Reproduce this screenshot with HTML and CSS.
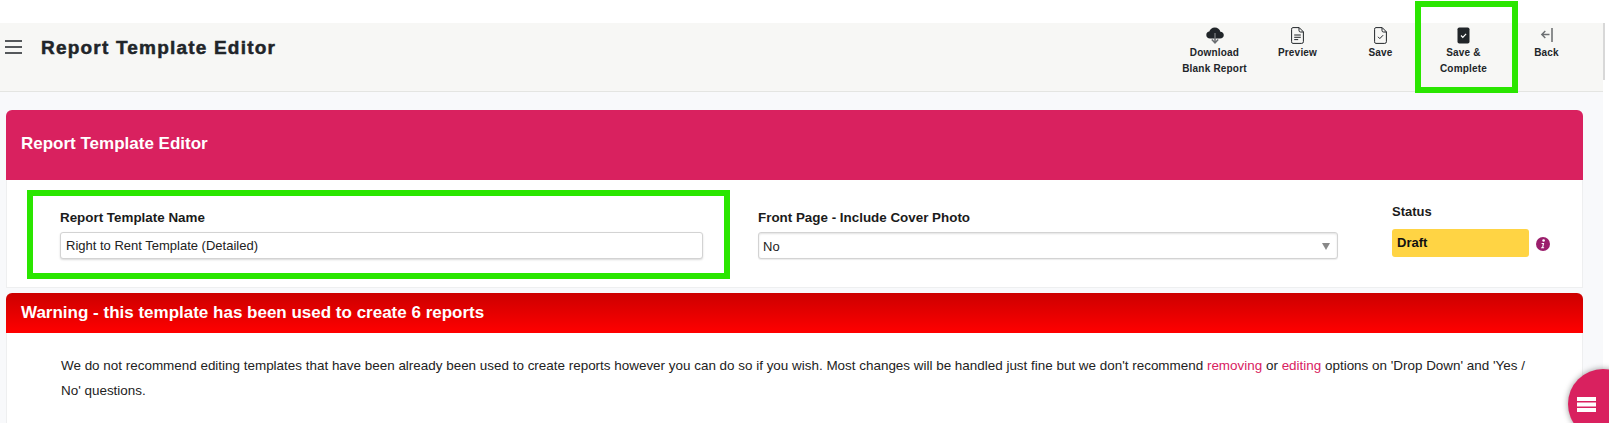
FILE: index.html
```html
<!DOCTYPE html>
<html lang="en">
<head>
    <meta charset="UTF-8">
    <meta name="viewport" content="width=device-width, initial-scale=1.0">
    <title>Report Template Editor</title>
    <link rel="stylesheet" href="styles.css">
</head>
<body>
    <div class="page">
        <header class="top-bar">
            <div class="top-left">
                <svg class="burger" width="17" height="14" viewBox="0 0 17 14"><path d="M0 1h17M0 7h17M0 13h17" stroke="#212529" stroke-width="1.3" fill="none"/></svg>
                <h1 class="top-title">Report Template Editor</h1>
            </div>
            <nav class="toolbar">
                <a class="tool">
                    <svg width="18" height="17" viewBox="0 0 18 17"><path d="M4 11.5C1.8 11.5 .3 10 .3 8 .3 6.100 1.700 4.800 3.300 4.600 3.900 2.200 6.100 .5 8.800 .5c2.800 0 5 1.800 5.600 4.200 2 .1 3.400 1.500 3.400 3.400 0 2-1.500 3.400-3.700 3.400z" fill="#212529"/><path d="M9 6v9.500M5.800 12.500 9 15.800l3.200-3.300" stroke="#6c6f72" stroke-width="1.500" fill="none"/></svg>
                    <span>Download<br>Blank Report</span>
                </a>
                <a class="tool">
                    <svg width="13" height="17" viewBox="0 0 13 17"><path d="M1.800 .6h6.400l4.200 4.200v9.900q0 1.700-1.700 1.700H1.800Q.6 16.400.6 14.700V2.300Q.6.600 1.800.6zM8 .8v2.700q0 1.500 1.500 1.500h2.800M3.200 8h6.600M3.200 10.300h6.600M3.200 12.600h4" stroke="#212529" stroke-width="1" fill="none"/></svg>
                    <span>Preview</span>
                </a>
                <a class="tool">
                    <svg width="13" height="17" viewBox="0 0 13 17"><path d="M1.800 .6h6.400l4.200 4.200v9.900q0 1.700-1.700 1.700H1.800Q.6 16.400.6 14.700V2.300Q.6.600 1.800.6zM8 .8v2.700q0 1.500 1.500 1.500h2.800" stroke="#212529" stroke-width="1" fill="none"/><path d="M4 9.800l1.800 1.800 3.300-3.400" stroke="#212529" stroke-width="1" fill="none"/></svg>
                    <span>Save</span>
                </a>
                <a class="tool">
                    <svg width="13" height="17" viewBox="0 0 13 17"><rect width="12" height="16" x=".5" y=".5" rx="1.800" fill="#212529"/><path d="M4 8.500l1.800 1.800 3.300-3.400" stroke="#fff" stroke-width="1.200" fill="none"/></svg>
                    <span>Save &amp;<br>Complete</span>
                </a>
                <a class="tool">
                    <svg width="13" height="17" viewBox="0 0 13 17"><path d="M12 1v14" stroke="#212529" stroke-width="1" fill="none"/><path d="M9.500 7.500H2M5.300 4 1.800 7.500 5.300 11" stroke="#6c6f72" stroke-width="1.400" fill="none"/></svg>
                    <span>Back</span>
                </a>
            </nav>
        </header>

        <section class="card">
            <div class="card-head pink">Report Template Editor</div>
            <div class="form-row">
                <div class="field field-name">
                    <label>Report Template Name</label>
                    <input type="text" value="Right to Rent Template (Detailed)">
                </div>
                <div class="field field-cover">
                    <label>Front Page - Include Cover Photo</label>
                    <div class="select-box">No<span class="caret"></span></div>
                </div>
                <div class="field field-status">
                    <label>Status</label>
                    <div class="status-pill">Draft</div>
                </div>
                <svg class="info" width="14" height="14" viewBox="0 0 14 14"><circle cx="7" cy="7" r="7" fill="#9b1f6c"/><circle cx="7.600" cy="3.500" r="1.300" fill="#fff"/><path d="M5.200 6h3l-1 4.200h1l-.2 1H5l.2-1h.9l.7-3.200h-.8z" fill="#fff"/></svg>
            </div>
        </section>

        <section class="card warning-card">
            <div class="card-head red">Warning - this template has been used to create 6 reports</div>
            <p class="warning-text">We do not recommend editing templates that have been already been used to create reports however you can do so if you wish. Most changes will be handled just fine but we don't recommend <a class="link">removing</a> or <a class="link">editing</a> options on 'Drop Down' and 'Yes / No' questions.</p>
        </section>
    </div>

    <div class="page-scroll"></div>
    <div class="highlight highlight-complete"></div>
    <div class="highlight highlight-name"></div>
    <div class="fab">
        <svg width="19" height="15" viewBox="0 0 19 15"><path d="M0 0h19v4H0zM0 5.500h19v4H0zM0 11h19v4H0z" fill="#fff"/></svg>
    </div>
</body>
</html>
```

FILE: styles.css
```css
* {
    margin: 0;
    padding: 0;
    box-sizing: border-box;
    font-family: "Liberation Sans", Arial, sans-serif;
}

html {
    overflow: hidden;
}

body {
    position: relative;
    height: 423px;
    padding-top: 23px;
    background: #fff;
    color: #212529;
    overflow: hidden;
}

.page {
    width: 1603px;
    height: 400px;
    background: #f8f9fb;
    overflow: hidden;
}

.top-bar {
    height: 69px;
    background: #f7f7f5;
    border-bottom: 1px solid #e4e5e2;
    display: flex;
    justify-content: space-between;
}

.top-left {
    display: flex;
    align-items: flex-start;
    gap: 19px;
    padding: 17px 0 0 5px;
}

.top-title {
    font-size: 19px;
    line-height: 15px;
    letter-spacing: 1.2px;
    -webkit-text-stroke: 0.5px #212529;
}

.toolbar {
    display: flex;
    padding: 4px 15px 0 0;
}

.tool {
    width: 83px;
    display: flex;
    flex-direction: column;
    align-items: center;
    font-size: 10px;
    font-weight: bold;
    line-height: 16px;
    letter-spacing: 0.2px;
    text-align: center;
}

.tool svg {
    height: 17px;
    margin-bottom: 1px;
}

.card {
    width: 1577px;
    margin: 18px 0 0 6px;
    background: #fff;
    border: 1px solid #eeeff0;
    border-width: 0 1px 1px 1px;
    border-radius: 6px 6px 0 0;
}

.card-head {
    color: #fff;
    font-weight: bold;
    font-size: 17px;
    border-radius: 6px 6px 0 0;
    margin: 0 -1px;
}

.pink {
    height: 70px;
    background: #d9215f;
    line-height: 68px;
    padding-left: 15px;
}

.form-row {
    height: 107px;
    display: flex;
    padding-left: 53px;
}

.field label {
    display: block;
    font-size: 13.4px;
    font-weight: bold;
    line-height: 16px;
    color: #1b1b1b;
}

.field-name {
    width: 643px;
    padding-top: 30px;
}

.field-name input,
.select-box {
    display: block;
    width: 100%;
    height: 27px;
    margin-top: 6px;
    padding: 0 5px;
    font-size: 13px;
    line-height: 27px;
    color: #222;
    background: #fff;
    border: 1px solid #d3d3d3;
    border-radius: 3px;
    box-shadow: 0 1px 2px rgba(0, 0, 0, 0.15);
}

.field-cover {
    width: 580px;
    margin-left: 55px;
    padding-top: 30px;
}

.select-box {
    position: relative;
    padding: 0 4px;
    box-shadow: inset 0 1px 2px rgba(0, 0, 0, 0.12), 0 1px 1px rgba(0, 0, 0, 0.08);
}

.caret {
    position: absolute;
    right: 7px;
    top: 10px;
    border-left: 4px solid transparent;
    border-right: 4px solid transparent;
    border-top: 7px solid #888;
}

.field-status {
    width: 137px;
    margin-left: 54px;
    padding-top: 24px;
}

.field-status label {
    font-size: 13px;
}

.status-pill {
    height: 28px;
    margin-top: 9px;
    padding-left: 5px;
    background: #ffd444;
    border-radius: 3px;
    font-size: 13px;
    font-weight: bold;
    line-height: 27px;
    color: #111;
}

.info {
    margin: 57px 0 0 7px;
}

.warning-card {
    margin-top: 5px;
    border-bottom: 0;
    height: 130px;
}

.red {
    height: 40px;
    background: linear-gradient(#cc0000, #ff0000);
    line-height: 39px;
    padding-left: 15px;
}

.warning-text {
    padding: 20px 54px 0 54px;
    font-size: 13.44px;
    line-height: 25px;
    color: #222;
}

.link {
    color: #d9215f;
}

.page-scroll {
    position: absolute;
    left: 1603px;
    top: 23px;
    width: 2px;
    height: 57px;
    background: #d8d8d8;
}

.highlight {
    position: absolute;
    border: 6px solid #2ae600;
}

.highlight-complete {
    left: 1415px;
    top: 1px;
    width: 103px;
    height: 92px;
}

.highlight-name {
    left: 27px;
    top: 190px;
    width: 703px;
    height: 89px;
}

.fab {
    position: absolute;
    left: 1568px;
    top: 369px;
    width: 70px;
    height: 70px;
    border-radius: 50%;
    background: #d9215f;
    box-shadow: 0 0 6px rgba(0, 0, 0, 0.4);
    padding: 28px 0 0 9px;
}

.fab svg {
    display: block;
}
```
